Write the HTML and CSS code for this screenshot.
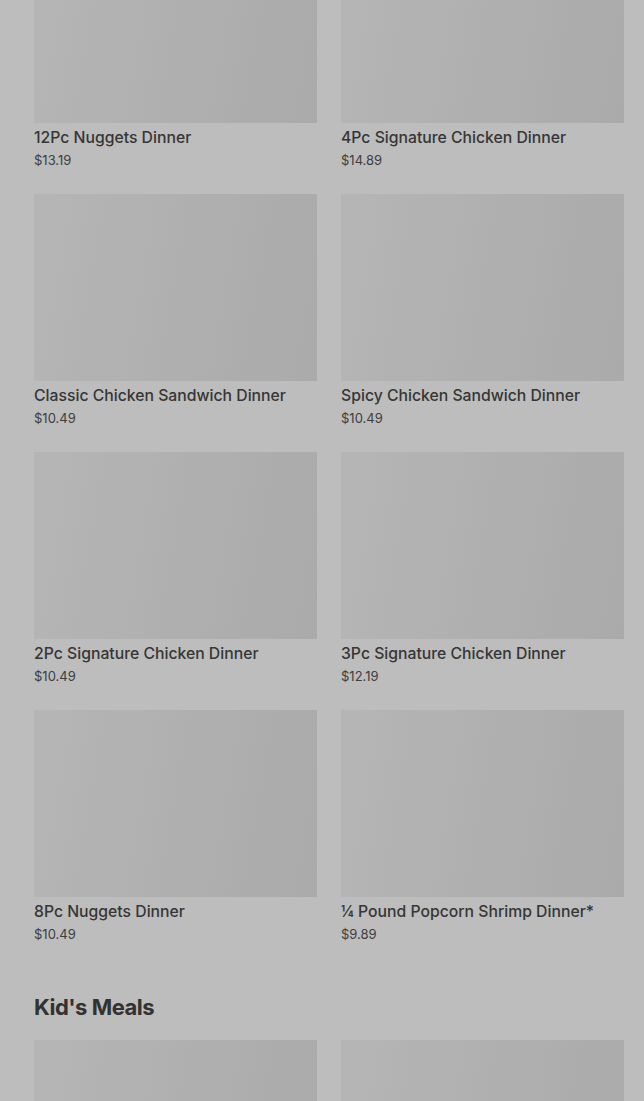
FILE: index.html
```html
<!DOCTYPE html>
<html lang="en">
<head>
    <meta charset="UTF-8">
    <meta name="viewport" content="width=device-width, initial-scale=1.0">
    <title>Menu</title>
    <link rel="stylesheet" href="styles.css">
</head>
<body>
    <div class="menu">
        <section class="menu-section">
            <div class="item-grid">
                <div class="item">
                    <div class="item-img"></div>
                    <div class="item-name">12Pc Nuggets Dinner</div>
                    <div class="item-price">$13.19</div>
                </div>
                <div class="item">
                    <div class="item-img"></div>
                    <div class="item-name">4Pc Signature Chicken Dinner</div>
                    <div class="item-price">$14.89</div>
                </div>
                <div class="item">
                    <div class="item-img"></div>
                    <div class="item-name">Classic Chicken Sandwich Dinner</div>
                    <div class="item-price">$10.49</div>
                </div>
                <div class="item">
                    <div class="item-img"></div>
                    <div class="item-name">Spicy Chicken Sandwich Dinner</div>
                    <div class="item-price">$10.49</div>
                </div>
                <div class="item">
                    <div class="item-img"></div>
                    <div class="item-name">2Pc Signature Chicken Dinner</div>
                    <div class="item-price">$10.49</div>
                </div>
                <div class="item">
                    <div class="item-img"></div>
                    <div class="item-name">3Pc Signature Chicken Dinner</div>
                    <div class="item-price">$12.19</div>
                </div>
                <div class="item">
                    <div class="item-img"></div>
                    <div class="item-name">8Pc Nuggets Dinner</div>
                    <div class="item-price">$10.49</div>
                </div>
                <div class="item">
                    <div class="item-img"></div>
                    <div class="item-name">¼ Pound Popcorn Shrimp Dinner*</div>
                    <div class="item-price">$9.89</div>
                </div>
            </div>
        </section>

        <section class="menu-section">
            <h2 class="section-title">Kid's Meals</h2>
            <div class="item-grid">
                <div class="item">
                    <div class="item-img"></div>
                </div>
                <div class="item">
                    <div class="item-img"></div>
                </div>
            </div>
        </section>
    </div>

    <div class="backdrop"></div>
</body>
</html>
```

FILE: styles.css
```css
/* page */
body {
    margin: 0;
    background-color: #fff;
    font-family: Inter, "Liberation Sans", sans-serif;
    color: #4d4d4d;
}

.menu {
    padding: 0 20px 0 34px;
    margin-top: -64px;
}

.menu-section {
    margin-bottom: 50px;
}

.section-title {
    margin: 0 0 19px;
    font-size: 22px;
    line-height: 28px;
    font-weight: 700;
    letter-spacing: -0.5px;
    color: #444;
}

.item-grid {
    display: grid;
    grid-template-columns: 1fr 1fr;
    column-gap: 24px;
    row-gap: 25px;
}

.item-img {
    height: 187px;
    background: linear-gradient(100deg, #f5f5f5 0%, #ececec 60%, #e6e6e6 100%);
}

.item-name {
    margin-top: 4px;
    font-size: 15.75px;
    line-height: 22px;
    font-weight: 500;
    color: #4a4a4a;
}

.item-price {
    margin-top: 2px;
    font-size: 13px;
    line-height: 18px;
    color: #555;
}

/* modal backdrop over the menu */
.backdrop {
    position: fixed;
    inset: 0;
    background-color: rgba(0, 0, 0, 0.26);
}
```
